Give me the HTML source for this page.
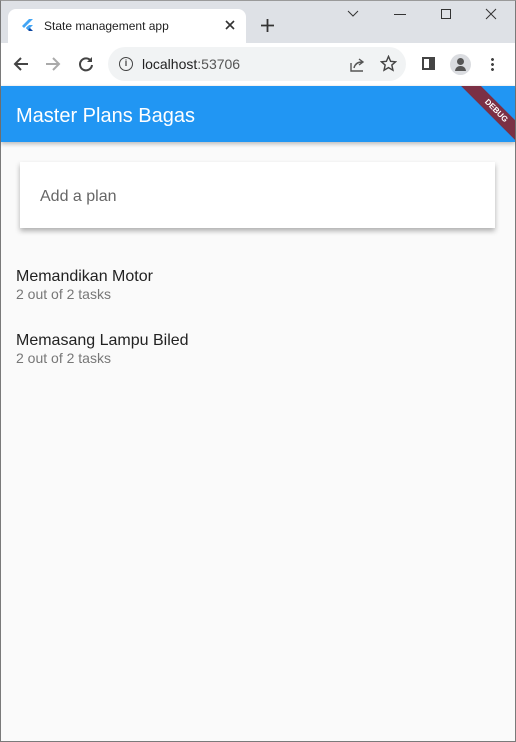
<!DOCTYPE html>
<html><head><style>
*{margin:0;padding:0;box-sizing:border-box}
body{width:516px;height:742px;position:relative;overflow:hidden;background:#fafafa;font-family:"Liberation Sans",sans-serif;}
.abs{position:absolute}
</style></head><body>
<div class="abs" style="left:0;top:0;width:516px;height:742px;border:1px solid #7a7a7a;border-top-color:#9a9a9a"></div>
<div class="abs" style="left:1px;top:1px;width:514px;height:42px;background:#dee1e6"></div>
<div class="abs" style="left:8px;top:9px;width:238px;height:34px;background:#fff;border-radius:8px 8px 0 0"></div>
<svg class="abs" style="left:22px;top:19px" width="12" height="14" viewBox="0 0 12 14"><path d="M7 0L0 7l2 2 9-9z" fill="#42a5f5"/><path d="M4 9l3 3h4l-5-5z" fill="#0d47a1"/><path d="M4 9l3-3h4l-5 5z" fill="#42a5f5"/></svg>
<div class="abs" style="left:44px;top:19px;font-size:12px;color:#222">State management app</div>
<svg class="abs" style="left:225px;top:20px" width="10" height="10"><path d="M1 1l8 8M9 1L1 9" stroke="#333" stroke-width="1.6"/></svg>
<svg class="abs" style="left:261px;top:19px" width="13" height="13"><path d="M6.5 0v13M0 6.5h13" stroke="#333" stroke-width="1.8"/></svg>
<svg class="abs" style="left:346px;top:8px" width="14" height="10"><path d="M2 3l5 5 5-5" stroke="#333" fill="none"/></svg>
<div class="abs" style="left:394px;top:14px;width:12px;height:1px;background:#333"></div>
<div class="abs" style="left:441px;top:9px;width:10px;height:10px;border:1px solid #333"></div>
<svg class="abs" style="left:485px;top:8px" width="12" height="12"><path d="M1 1l10 10M11 1L1 11" stroke="#333"/></svg>
<div class="abs" style="left:1px;top:43px;width:514px;height:42px;background:#fff"></div>
<svg class="abs" style="left:12px;top:55px" width="18" height="18"><path d="M16 9H3M9 3L3 9l6 6" stroke="#444" stroke-width="2" fill="none"/></svg>
<svg class="abs" style="left:44px;top:55px" width="18" height="18"><path d="M2 9h13M9 3l6 6-6 6" stroke="#aaa" stroke-width="2" fill="none"/></svg>
<svg class="abs" style="left:77px;top:55px" width="18" height="18"><path d="M14 6A6 6 0 1 0 15 10" stroke="#444" stroke-width="2" fill="none"/><path d="M15 2v5h-5z" fill="#444"/></svg>
<div class="abs" style="left:108px;top:47px;width:298px;height:34px;background:#f1f3f4;border-radius:17px"></div>
<div class="abs" style="left:119px;top:57px;width:14px;height:14px;border:1.5px solid #444;border-radius:50%;font-size:9px;text-align:center;line-height:11px;color:#444;font-weight:bold">i</div>
<div class="abs" style="left:142px;top:56px;font-size:14px;color:#222">localhost<span style="color:#555">:53706</span></div>
<svg class="abs" style="left:349px;top:56px" width="17" height="16"><path d="M2 7v8h12" stroke="#555" stroke-width="1.4" fill="none"/><path d="M5 12c1-4 4-6 8-6M10 3l4 3-4 3" stroke="#555" stroke-width="1.4" fill="none"/></svg>
<svg class="abs" style="left:380px;top:55px" width="17" height="17" viewBox="0 0 24 24"><path d="M12 2l3 7 7 .6-5.3 4.6 1.6 7.3L12 17.8 5.7 21.5l1.6-7.3L2 9.6 9 9z" stroke="#444" stroke-width="2" fill="none"/></svg>
<div class="abs" style="left:422px;top:57px;width:13px;height:13px;border:2px solid #444;border-right-width:6px"></div>
<div class="abs" style="left:450px;top:54px;width:21px;height:21px;border-radius:50%;background:#dadce0"></div>
<div class="abs" style="left:457px;top:58px;width:7px;height:7px;border-radius:50%;background:#555"></div>
<div class="abs" style="left:455px;top:66px;width:11px;height:5px;border-radius:5px 5px 0 0;background:#555"></div>
<div class="abs" style="left:491px;top:57px;width:3px;height:14px;background:radial-gradient(circle,#444 1.3px,transparent 1.6px) 0 0/3px 5px"></div>
<div class="abs" style="left:1px;top:86px;width:514px;height:56px;background:#2196f3;box-shadow:0 2px 4px rgba(0,0,0,.25);overflow:hidden">
<div class="abs" style="left:15px;top:19px;font-size:20px;color:#fff">Master Plans Bagas</div>
<div class="abs" style="left:452px;top:18px;width:86px;height:14px;background:#7b3045;transform:rotate(45deg);color:#fff;font-size:8px;font-weight:bold;text-align:center;line-height:14px">DEBUG</div>
</div>
<div class="abs" style="left:20px;top:162px;width:475px;height:66px;background:#fff;box-shadow:0 3px 5px rgba(0,0,0,.3)"></div>
<div class="abs" style="left:40px;top:188px;font-size:16px;color:#666">Add a plan</div>
<div class="abs" style="left:16px;top:268px;font-size:16px;color:#222">Memandikan Motor</div>
<div class="abs" style="left:16px;top:286px;font-size:14px;color:#777">2 out of 2 tasks</div>
<div class="abs" style="left:16px;top:332px;font-size:16px;color:#222">Memasang Lampu Biled</div>
<div class="abs" style="left:16px;top:350px;font-size:14px;color:#777">2 out of 2 tasks</div>
</body></html>
